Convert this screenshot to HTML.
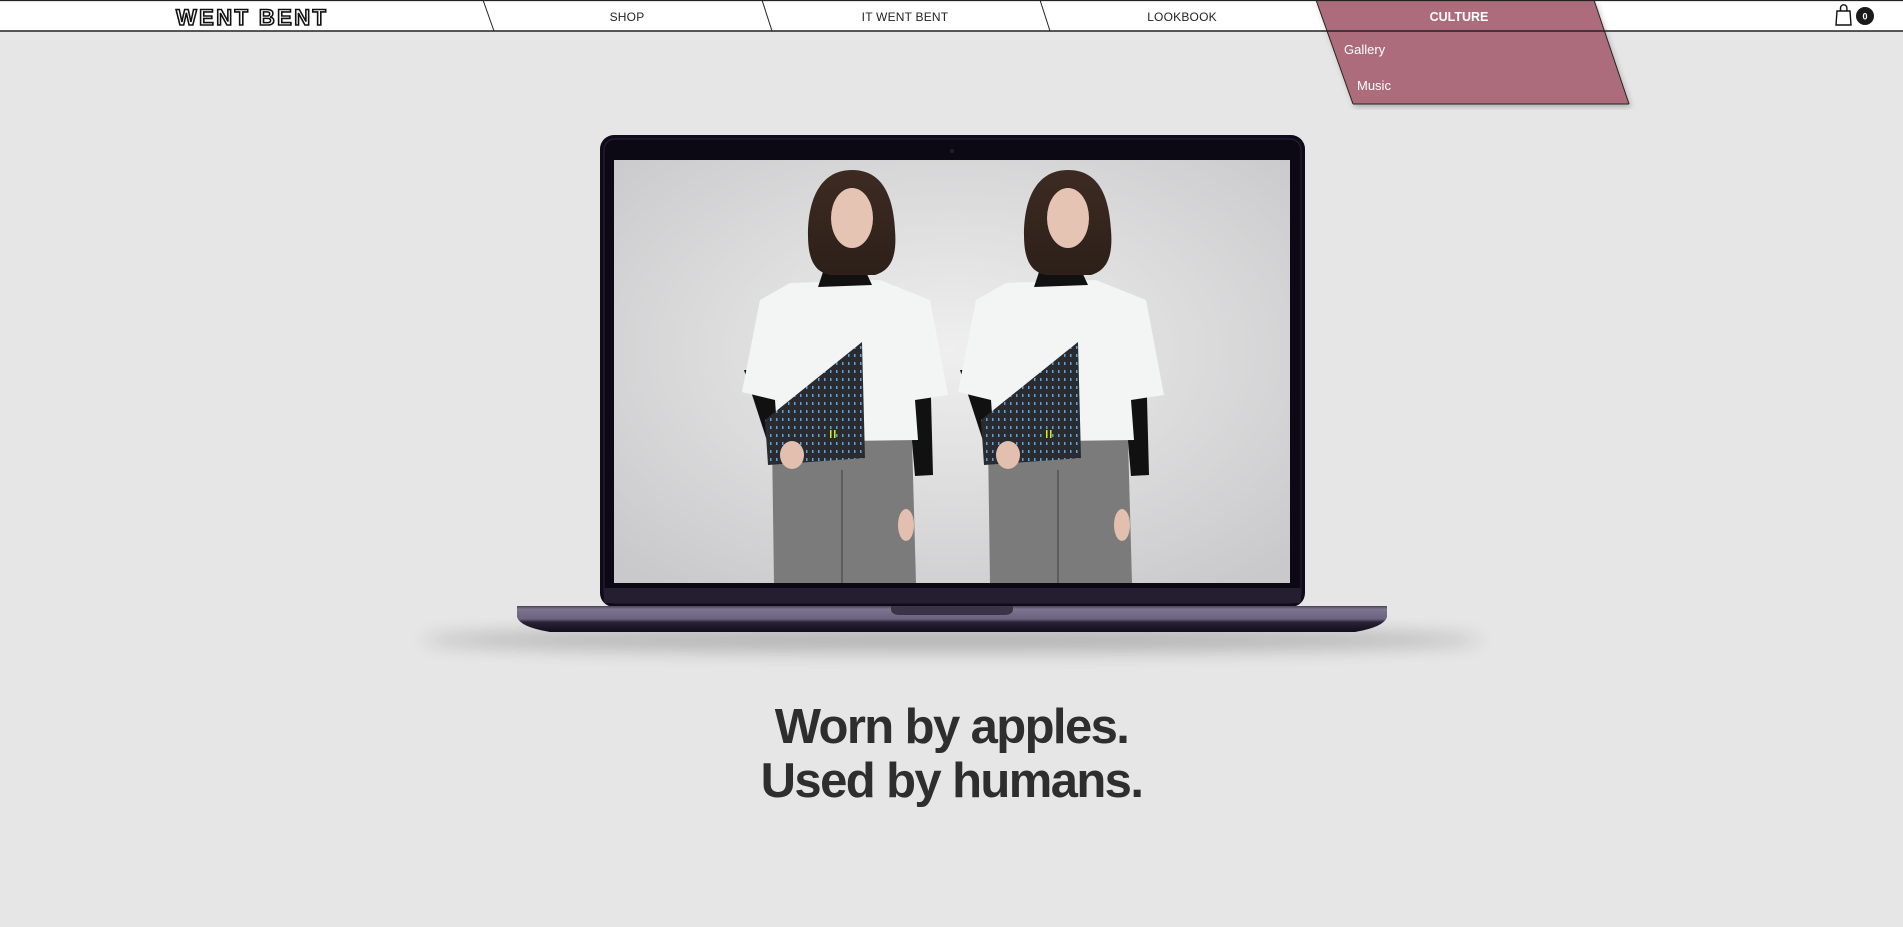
<!DOCTYPE html>
<html><head><meta charset="utf-8">
<style>
html,body{margin:0;padding:0;width:1903px;height:927px;overflow:hidden;background:#e6e6e6;font-family:"Liberation Sans",sans-serif;}
.item{position:absolute;top:10px;font-size:12px;color:#222;transform:translateX(-50%);letter-spacing:0.2px}
.logo{position:absolute;left:176px;top:5px;font-size:22px;font-weight:bold;letter-spacing:2.4px;color:#fff;-webkit-text-stroke:1.6px #111;font-family:"Liberation Sans",sans-serif;}
.head{position:absolute;left:0;width:1903px;text-align:center;font-weight:bold;font-size:49px;color:#2e2e2e;letter-spacing:-1.6px;}
</style></head><body>
<svg style="position:absolute;left:0;top:0" width="1903" height="110">
  <defs><filter id="sh" x="-10%" y="-10%" width="130%" height="140%"><feDropShadow dx="2" dy="3" stdDeviation="3" flood-color="#000" flood-opacity="0.25"/></filter></defs>
  <rect x="0" y="0" width="1903" height="31" fill="#fff"/>
  <polygon points="1316,0 1594,0 1629,104 1353,104" fill="#ad6c7b" filter="url(#sh)"/>
  <line x1="0" y1="0.5" x2="1903" y2="0.5" stroke="#222" stroke-width="1.2"/>
  <line x1="0" y1="31" x2="1903" y2="31" stroke="#222" stroke-width="1.5"/>
  <line x1="483" y1="0" x2="494" y2="31" stroke="#222" stroke-width="1"/>
  <line x1="762" y1="0" x2="772" y2="31" stroke="#222" stroke-width="1"/>
  <line x1="1040" y1="0" x2="1050" y2="31" stroke="#222" stroke-width="1"/>
  <line x1="1316" y1="0" x2="1353" y2="104" stroke="#222" stroke-width="1"/>
  <line x1="1594" y1="0" x2="1629" y2="104" stroke="#222" stroke-width="1"/>
  <line x1="1353" y1="104" x2="1629" y2="104" stroke="#222" stroke-width="1"/>
  <text x="1459" y="21" text-anchor="middle" font-family="Liberation Sans" font-weight="bold" font-size="12.5" fill="#fff">CULTURE</text>
  <text x="1344" y="54" font-family="Liberation Sans" font-size="13" fill="#fff">Gallery</text>
  <text x="1357" y="90" font-family="Liberation Sans" font-size="13" fill="#fff">Music</text>
  <path d="M1837 11 h13 l1 14 h-15 z" fill="none" stroke="#111" stroke-width="1.4"/>
  <path d="M1840.5 11 v-3 a3.2 3.2 0 0 1 6.4 0 v3" fill="none" stroke="#111" stroke-width="1.4"/>
  <circle cx="1865" cy="16" r="9" fill="#1a1a1a"/>
  <text x="1865" y="19.5" text-anchor="middle" font-family="Liberation Sans" font-weight="bold" font-size="9" fill="#fff">0</text>
</svg>
<div class="logo">WENT BENT</div>
<div class="item" style="left:627px">SHOP</div>
<div class="item" style="left:905px">IT WENT BENT</div>
<div class="item" style="left:1182px">LOOKBOOK</div>

<svg style="position:absolute;left:0;top:0" width="1903" height="927">
  <defs>
    <radialGradient id="bg" cx="50%" cy="45%" r="70%"><stop offset="0" stop-color="#efefef"/><stop offset="1" stop-color="#c9c9cb"/></radialGradient>
    <filter id="blur" x="-20%" y="-200%" width="140%" height="500%"><feGaussianBlur stdDeviation="9"/></filter>
    <linearGradient id="base" x1="0" y1="0" x2="0" y2="1"><stop offset="0" stop-color="#4a4258"/><stop offset="0.12" stop-color="#7d7490"/><stop offset="0.5" stop-color="#6c6380"/><stop offset="0.62" stop-color="#2a2236"/><stop offset="1" stop-color="#120c1c"/></linearGradient>
    <linearGradient id="hair" x1="0" y1="0" x2="0" y2="1"><stop offset="0" stop-color="#3d2b22"/><stop offset="1" stop-color="#2c2019"/></linearGradient>
    <pattern id="dots" width="6" height="8" patternUnits="userSpaceOnUse"><rect width="6" height="8" fill="#2a2b30"/><rect x="2" y="2" width="1.5" height="3" fill="#5aa7d6"/></pattern>
    <g id="p">
      <path d="M772 440 L912 440 L916 583 L774 583 Z" fill="#7b7b7b"/>
      <path d="M842 470 L842 583" stroke="#5d5d5d" stroke-width="2"/>
      <path d="M744 370 L770 370 L790 440 L770 450 Z" fill="#111"/>
      <path d="M905 360 L930 360 L933 475 L915 476 Z" fill="#111"/>
      <path d="M790 283 L880 280 L930 300 L948 395 L915 400 L918 440 L778 442 L775 400 L742 392 L760 300 Z" fill="#f3f5f4"/>
      <path d="M823 272 L866 272 L872 285 L818 287 Z" fill="#111"/>
      <path d="M852 170 C820 170 808 200 808 235 C808 260 815 272 830 275 L875 275 C892 270 897 255 895 230 C893 195 882 170 852 170 Z" fill="url(#hair)"/>
      <ellipse cx="852" cy="218" rx="21" ry="30" fill="#e6c4b3"/>
      <path d="M765 420 L862 342 L865 458 L768 465 Z" fill="url(#dots)"/>
      <rect x="830" y="430" width="1.5" height="8" fill="#d4f01a"/><rect x="834" y="430" width="1.5" height="8" fill="#d4f01a"/>
      <ellipse cx="792" cy="455" rx="12" ry="14" fill="#e2bfae"/>
      <ellipse cx="906" cy="525" rx="8" ry="16" fill="#e2bfae"/>
    </g>
  </defs>
  <!-- shadow -->
  <ellipse cx="952" cy="640" rx="530" ry="12" fill="#000" opacity="0.22" filter="url(#blur)"/>
  <!-- bezel -->
  <rect x="600" y="135" width="705" height="472" rx="14" fill="#100a1a"/>
  <rect x="604" y="139" width="697" height="464" rx="11" fill="#0c0814" stroke="#2a2338" stroke-width="1"/>
  <circle cx="952" cy="151" r="2" fill="#222"/>
  <rect x="614" y="160" width="676" height="423" fill="url(#bg)"/>
  <use href="#p"/>
  <use href="#p" transform="translate(216 0)"/>
  <rect x="604" y="588" width="697" height="15" fill="#241e30"/>
  <!-- base -->
  <path d="M517 606 L1387 606 L1387 617 Q1384 627 1355 632 L550 632 Q520 627 517 617 Z" fill="url(#base)"/>
  <path d="M891 606 L1013 606 L1013 610 Q1012 615 1004 615 L900 615 Q892 615 891 610 Z" fill="#3b3447"/>
</svg>

<div class="head" style="top:700px;line-height:54px">Worn by apples.<br>Used by humans.</div>
</body></html>
